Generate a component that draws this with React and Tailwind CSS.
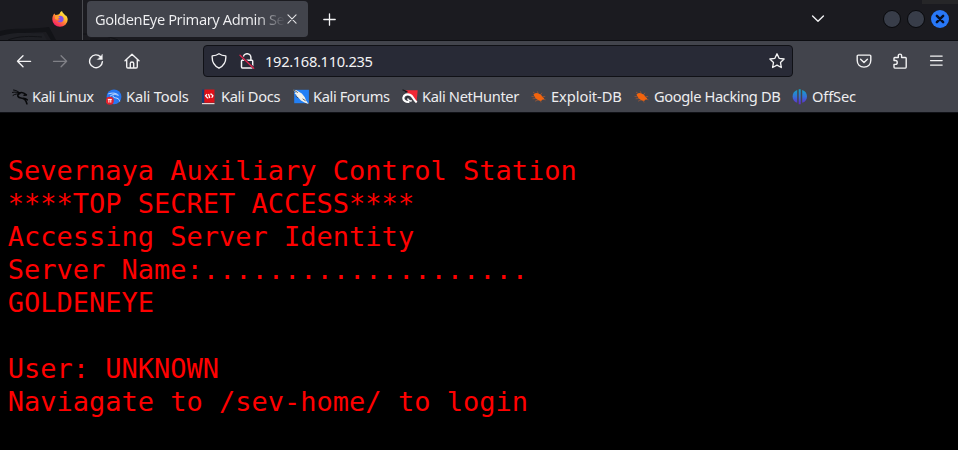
import React from 'react';

const lines = [
  'Severnaya Auxiliary Control Station',
  '****TOP SECRET ACCESS****',
  'Accessing Server Identity',
  'Server Name:....................',
  'GOLDENEYE',
  '',
  'User: UNKNOWN',
  'Naviagate to /sev-home/ to login',
];

function Icon({ children, className = '', size = 16 }) {
  return (
    <svg
      width={size}
      height={size}
      viewBox="0 0 16 16"
      fill="none"
      stroke="currentColor"
      strokeWidth="1.35"
      strokeLinecap="round"
      strokeLinejoin="round"
      className={`block shrink-0 ${className}`}
    >
      {children}
    </svg>
  );
}

function FirefoxLogo() {
  return (
    <svg width="16" height="16" viewBox="0 0 16 16" className="ml-[52px] block shrink-0">
      <defs>
        <linearGradient id="fox" x1="0.85" y1="0.05" x2="0.2" y2="0.95">
          <stop offset="0" stopColor="#fff44f" />
          <stop offset="0.35" stopColor="#ffbd2f" />
          <stop offset="0.6" stopColor="#ff7139" />
          <stop offset="1" stopColor="#f5156c" />
        </linearGradient>
      </defs>
      <path d="M2.3 2.4 3.4 4 5.3 3.7C7 3.7 8 2.5 8.4 1L10 .1C10.4 2 12 2.6 13 4.2L14.2 4.7C15 5.7 15.7 7 15.7 8.5a7.7 7.3 0 0 1-15.4 0C.3 6 1 4.2 2.3 2.4Z" fill="url(#fox)" />
      <path d="M5.2 7.2C6 5 8.4 4.1 10.2 5.3c2 1.3 2 4.3.1 5.5-2 1.2-4.5.4-5-1.3 1.3.6 2.4.2 3-.8-1.5.1-1.4-1.3-3.1-1.5Z" fill="#8050e8" />
      <path d="M3 5.2 5.1 4.5 8 6.4 6.2 7.4 5.4 8.9 3 8Z" fill="#ff9f2e" />
    </svg>
  );
}

function KaliDragon({ color = '#08090b' }) {
  return (
    <g fill="none" stroke={color} strokeLinecap="round" strokeLinejoin="round">
      <path d="M.5 3.4C3 2.8 5 3.1 8 4M1.5 1C4 1.2 6 2.4 8 4M1 6.4C3 5 5 4.6 7.7 5" strokeWidth="1" />
      <path d="M7 4.2C9.5 2.6 12 3.6 14.4 5.9L12 6.2" strokeWidth="1.5" />
      <path d="M6.6 4.8C5 6.8 6 8.6 9 9c3.5.5 5.2 2 5.9 5.8M11 9.2c1.9-.1 3.2.5 4.2 1.6" strokeWidth="1.6" />
    </g>
  );
}

function BookmarkIcon({ kind }) {
  const common = { width: 16, height: 16, viewBox: '0 0 16 16', className: 'block shrink-0' };
  if (kind === 'kali') {
    return <svg {...common}><KaliDragon /></svg>;
  }
  if (kind === 'tools') {
    return (
      <svg {...common}>
        <circle cx="8" cy="7.8" r="7.4" fill="#2777f1" />
        <path d="M2.3 4.9C6 3.7 10 3.6 12.7 6.4M4 7.3C7 4.8 10 4.8 11.5 6.5M7 6.5C6.8 8.7 9 8.6 11 9.2c1.8.6 2.5 1.7 2.7 3.3" fill="none" stroke="#c5ddff" strokeWidth="1" />
        <circle cx="3.8" cy="11.8" r="4" fill="#e3212b" />
        <path d="M1.8 10.4h4M2.9 10.4v3.2M4.8 10.4v3.2" fill="none" stroke="#fff" strokeWidth="1" />
      </svg>
    );
  }
  if (kind === 'docs') {
    return (
      <svg {...common}>
        <path d="M1 .5h2.7v13.2H1Z" fill="#183b75" />
        <path d="M3.3.5h10.2v13.2H3.3Z" fill="#df1018" />
        <path d="M1 14h12.5v1.2H1Z" fill="#e6d6d3" />
        <path d="M6.1 5.2 4.6 6.8l1.8 2h1M7.5 5l1.3 4M9.3 5h1l1.6 1.8-1.2 2" fill="none" stroke="#fff" strokeWidth="1.25" />
      </svg>
    );
  }
  if (kind === 'forums') {
    return (
      <svg {...common}>
        <path d="M1.2.8H15.9V14.2H1.2Z" fill="#2380f5" />
        <path d="M.2.8 3.4 1.2 8.8 4.6 11.6 8 13.2 11.8 15.6 15 11.6 13.4 8 11.4 5.2 8.6 2.6 6.8 4.2 6.4 1.4 4.2 2.8 3.8Z" fill="#f2f1ea" />
        <path d="M.8 1 4.8 3.6M9.6 9.8l3 2M2.6 7l2.6 1.9" stroke="#33383e" strokeWidth=".8" />
      </svg>
    );
  }
  if (kind === 'hunter') {
    return (
      <svg {...common}>
        <path d="M3 1.2h12.7l-1.2 12.5L9.5 7.4Z" fill="#f12936" />
        <path d="M.5.7 4.5 2.5 3 3" fill="none" stroke="#15171a" strokeWidth="1.2" />
        <path d="M7.3 12.9C3.6 13.4 1 11.2 1.4 8.6 1.8 5.6 5.6 4.6 8.4 6c2.7 1.4 2.9 4.6 6.3 7.4" fill="none" stroke="#fff" strokeWidth="2.2" />
        <path d="M9.8 11.6C8 12.4 5.8 11.3 5.8 9.6" fill="none" stroke="#fff" strokeWidth="1.5" />
        <path d="M4.2 10.4C3.6 8.4 5.5 7.1 7.3 8" fill="none" stroke="#202329" strokeWidth=".9" />
      </svg>
    );
  }
  if (kind === 'exploit') {
    return (
      <svg {...common}>
        <path d="M2.4 5.4 4.8 4 7.2 4.2 8.4 5.1 10 5.6 11.2 7.8 13.2 9.2 12.8 10.4 11 10.8 10.3 12 7.8 11.5 5.7 10.2 4 8.5Z" fill="#f3640d" />
        <path d="M4 4.5 2 3M7 4 6.3 2.3M9.6 5.6l1.4-1.8M11.2 7.5h3M3.2 7.8.5 7.4M5 9.5l-3.4.3M7 11l-3 1.2M9.5 12l.6 1.5M12.3 10.3l2.2.5" fill="none" stroke="#a95830" strokeWidth=".7" />
      </svg>
    );
  }
  return (
    <svg {...common}>
      <defs>
        <linearGradient id="offsec" x1="0" y1="0" x2="0" y2="1">
          <stop offset="0" stopColor="#12a5c5" />
          <stop offset="0.5" stopColor="#3670d8" />
          <stop offset="1" stopColor="#6526c9" />
        </linearGradient>
      </defs>
      <path d="M5.2 1v12.8C2.4 13 .6 10.7.6 7.5S2.4 1.8 5.2 1ZM10.2 1v12.8c2.9-.8 4.8-3.1 4.8-6.3S13.1 1.8 10.2 1ZM6.7.3h2v15h-2Z" fill="url(#offsec)" />
    </svg>
  );
}

function Bookmark({ kind, label, className }) {
  return (
    <div className={`flex shrink-0 items-center gap-1 ${className}`}>
      <BookmarkIcon kind={kind} />
      <span className="-mt-0.5 whitespace-nowrap">{label}</span>
    </div>
  );
}

function TabBar() {
  return (
    <div className="relative flex h-[41px] border-b border-[#0d0e12] bg-[#1b1b20]">
      <svg className="absolute left-0 top-0" width="150" height="40" viewBox="0 0 150 40">
        <path d="M0 31C16 27 32 30 49 27l7 13h-5l-5-8C30 33 16 32 0 37Z" fill="#121317" />
        <path d="M0 36C18 31 29 34 43 33l4 7H0Z" fill="#1e1f24" />
        <path d="M8 40c10-4 22-4 34-3M83 34c17 0 24 2 35 6M90 39h20" fill="none" stroke="#121317" strokeWidth="1" />
      </svg>
      <div className="absolute right-0 top-0 h-1 w-9 bg-[#262628]" />
      <div className="relative flex w-full items-start">
        <div className="flex h-[38px] w-[82px] items-center"><FirefoxLogo /></div>
        <div className="h-10 w-px bg-[#4a4b50]" />
        <div className="ml-1 mt-px flex h-9 w-[221px] items-center rounded bg-[#42444c] pl-2">
          <div className="w-[190px] whitespace-nowrap bg-linear-to-r from-[#f0f0f2] from-85% to-[#42444c] bg-clip-text text-[14.67px] tracking-[-0.42px] text-transparent">
            GoldenEye Primary Admin Se
          </div>
          <Icon size={10} className="ml-[2px] text-[#e5e5e7]">
            <path d="m1.5 1.5 13 13m0-13-13 13" strokeWidth="1.7" />
          </Icon>
        </div>
        <Icon size={13} className="ml-[15px] mt-[13px] text-[#f4f4f5]">
          <path d="M8 1v14M1 8h14" strokeWidth="1.6" />
        </Icon>
        <Icon size={14} className="ml-[475px] mt-3 text-[#f0f0f2]">
          <path d="m1.8 4.5 6.2 6 6.2-6" strokeWidth="1.6" />
        </Icon>
        <div className="ml-[58px] mt-[10px] flex gap-1.5">
          <div className="h-[18px] w-[18px] rounded-full border border-[#08090c] bg-[#383d49]" />
          <div className="h-[18px] w-[18px] rounded-full border border-[#08090c] bg-[#383d49]" />
          <div className="flex h-[18px] w-[18px] items-center justify-center rounded-full bg-[#2878f8]">
            <Icon size={10} className="text-[#071024]"><path d="m3 3 10 10m0-10-10 10" strokeWidth="4" /></Icon>
          </div>
        </div>
      </div>
    </div>
  );
}

function Toolbar() {
  return (
    <div className="flex h-10 items-center text-[#f3f3f4]">
      <Icon className="ml-4"><path d="M14.6 8.3H1.5M7 2.8 1.5 8.3l5.5 5.5" /></Icon>
      <Icon className="ml-5 text-[#808187]"><path d="M1.5 8.3h13.1M9.1 2.8l5.5 5.5-5.5 5.5" /></Icon>
      <Icon className="ml-5">
        <path d="M12.7 3.9A6.4 6.4 0 1 0 14.4 8.6" strokeWidth="1.4" />
        <path d="M14.4 1.5v5H9.6Z" fill="currentColor" strokeWidth=".4" />
      </Icon>
      <Icon className="ml-5">
        <path d="M1 7.7 8 1.2l7 6.5M2.7 6.3v7.4c0 .8.4 1.3 1.2 1.3h8.2c.8 0 1.2-.5 1.2-1.3V6.3M6.3 14.8v-4.5c0-.8.6-1.3 1.7-1.3s1.7.5 1.7 1.3v4.5" />
      </Icon>
      <div className="ml-[63px] flex h-8 w-[590px] items-center rounded border border-[#101116] bg-[#282a36]">
        <Icon className="ml-[7px]">
          <path d="M8 .8c-2 1.4-4.5 2-6.8 2.1C.8 8.3 3.7 13 8 15.2c4.3-2.2 7.2-6.9 6.8-12.3C12.5 2.8 10 2.2 8 .8Z" strokeWidth="1.35" />
        </Icon>
        <Icon className="ml-3">
          <path d="M4.3 7.3V4.5a3.8 3.8 0 0 1 7.6 0v2.8M3.2 7.3h9.7c.5 0 .8.3.8.8v6c0 .5-.3.8-.8.8H3.3c-.5 0-.8-.3-.8-.8v-6c0-.5.2-.8.7-.8Z" strokeWidth="1.45" />
          <path d="M1.2 2.2 14.8 15" stroke="#282a36" strokeWidth="2.4" />
          <path d="m1 2.2 13.7 13" stroke="#e2254e" strokeWidth="1.3" />
        </Icon>
        <span className="ml-[10px] text-[14.67px] tracking-[-0.32px]">192.168.110.235</span>
        <Icon className="ml-auto mr-[7px]">
          <path d="m8 .8 2.1 4.5 5 .7-3.6 3.5.8 5L8 12.1l-4.4 2.4.9-5L.9 6l5-.7Z" strokeWidth="1.35" />
        </Icon>
      </div>
      <Icon className="ml-[63px]">
        <path d="M2.2 2.1h11.6c.6 0 1 .4 1 1v4.2c0 4-2.7 6.8-6.8 6.8s-6.8-2.8-6.8-6.8V3.1c0-.6.4-1 1-1Z" strokeWidth="1.4" />
        <path d="m4.6 6.2 3.4 3.2 3.4-3.2" strokeWidth="1.4" />
      </Icon>
      <Icon className="ml-5">
        <path d="M2 7.2V5.3c0-.5.3-.8.8-.8h3.5V2.6c0-2 3.3-2 3.3 0v1.9h3.8c.5 0 .8.3.8.8v8.8c0 .6-.3 1-.8 1H2.8c-.5 0-.8-.4-.8-1v-2.7h1.5c2.3 0 2.3-3.9 0-3.9H2" strokeWidth="1.4" />
      </Icon>
      <Icon className="ml-5"><path d="M2.5 3.1h11.7M2.5 7.6h11.7M2.5 12.1h11.7" strokeWidth="1.2" /></Icon>
    </div>
  );
}

export default function App() {
  return (
    <div className="flex h-[450px] w-[958px] flex-col overflow-hidden bg-black font-['Noto_Sans',sans-serif]">
      <div className="h-[113px] shrink-0 border-b border-[#101116] bg-[#42444c] text-[#ededef]">
        <TabBar />
        <Toolbar />
        <div className="flex h-[31px] items-center text-[14.67px]">
          <Bookmark kind="kali" label="Kali Linux" className="ml-3 w-[94px] tracking-[-0.44px]" />
          <Bookmark kind="tools" label="Kali Tools" className="w-[95px] tracking-[-0.16px]" />
          <Bookmark kind="docs" label="Kali Docs" className="w-[92px] tracking-[-0.36px]" />
          <Bookmark kind="forums" label="Kali Forums" className="w-[109px] tracking-[-0.4px]" />
          <Bookmark kind="hunter" label="Kali NetHunter" className="w-[129px] tracking-[-0.36px]" />
          <Bookmark kind="exploit" label="Exploit-DB" className="w-[103px] tracking-[-0.08px]" />
          <Bookmark kind="exploit" label="Google Hacking DB" className="w-[158px] tracking-[-0.4px]" />
          <Bookmark kind="offsec" label="OffSec" className="tracking-[-0.15px]" />
        </div>
      </div>
      <main className="pl-[7.75px] pt-[41px] font-['DejaVu_Sans_Mono',monospace] text-[27px] leading-[33px] text-[#ff0000]">
        {lines.map((line, i) => (
          <div key={i} className="h-[33px] whitespace-pre">{line}</div>
        ))}
      </main>
    </div>
  );
}
